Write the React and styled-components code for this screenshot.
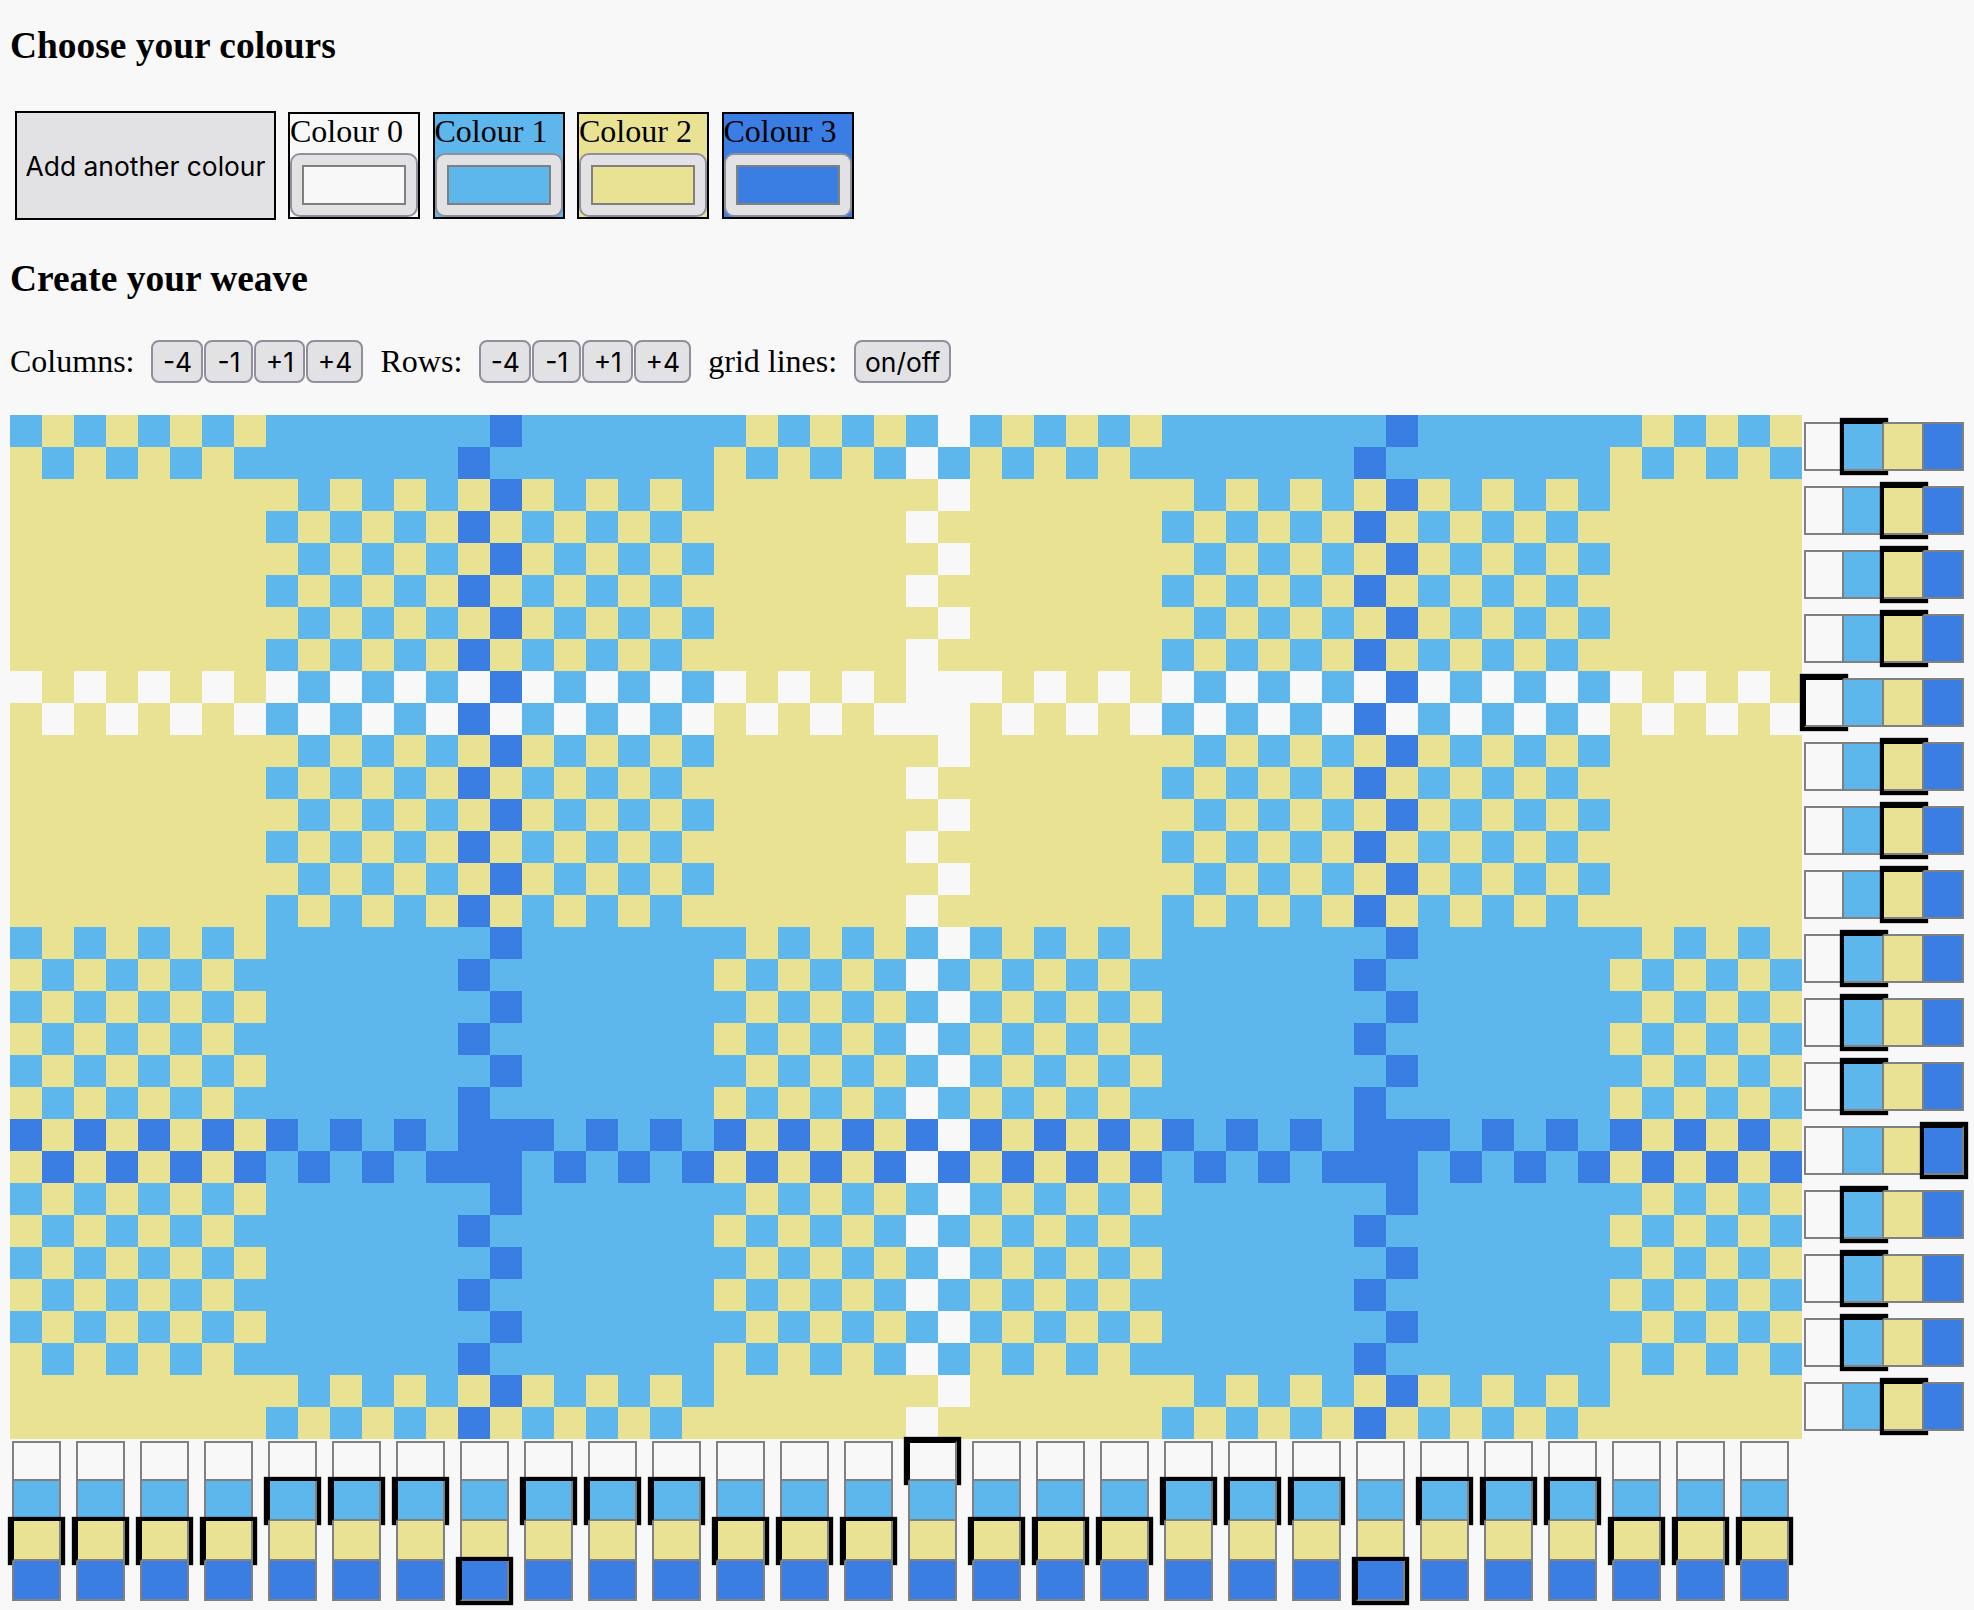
import React from "react";
import styled, { createGlobalStyle } from "styled-components";

const PALETTE = ["#f8f8f8", "#5db6ec", "#e9e293", "#3a7ee4"];
const COLUMN_COLOURS = [2,2,2,2,1,1,1,3,1,1,1,2,2,2,0,2,2,2,1,1,1,3,1,1,1,2,2,2];
const ROW_COLOURS = [1,2,2,2,0,2,2,2,1,1,1,3,1,1,1,2];

const GlobalStyle = createGlobalStyle`
  html, body { margin: 0; padding: 0; background: #f8f8f8; }
  body { font-family: "Liberation Serif", "Times New Roman", serif; font-size: 32px; color: #000; }
`;

const Page = styled.div`
  width: 1974px;
  height: 1610px;
  box-sizing: border-box;
  padding: 24px 0 0 10px;
  overflow: hidden;
`;

const Heading = styled.h3`
  margin: ${(p) => p.$top}px 0 0;
  font-size: 37.44px;
  line-height: 43px;
  font-weight: 700;
`;

const ColourBar = styled.div`
  display: flex;
  align-items: flex-start;
  margin: 44px 0 0 5px;
`;

const AddButton = styled.button`
  box-sizing: border-box;
  width: 261px;
  height: 109px;
  margin-right: 12px;
  padding: 0;
  background: #e2e2e5;
  border: 2.5px solid #000;
  border-radius: 0;
  font-family: Inter, "Liberation Sans", sans-serif;
  font-size: 26.4px;
  color: #000;
`;

const ColourItem = styled.div`
  box-sizing: border-box;
  width: 132px;
  height: 107px;
  margin: 1px 12.5px 0 0;
  display: flex;
  flex-direction: column;
  border: 2px solid #000;
  background: ${(p) => p.$colour};
`;

const ColourLabel = styled.span`
  font-size: 32px;
  line-height: 35px;
  height: 39px;
  white-space: nowrap;
`;

const SwatchButton = styled.div`
  box-sizing: border-box;
  width: 128px;
  height: 64px;
  display: flex;
  align-items: center;
  justify-content: center;
  background: #e2e2e5;
  border: 2px solid #8f8f9d;
  border-radius: 10px;
`;

const Swatch = styled.div`
  box-sizing: border-box;
  width: 104px;
  height: 40px;
  border: 2px solid #808080;
  background: ${(p) => p.$colour};
`;

const Toolbar = styled.div`
  display: flex;
  align-items: center;
  height: 43px;
  margin-top: 40px;
`;

const ToolLabel = styled.span`
  font-size: 32px;
  line-height: 43px;
  margin-right: 17px;
  white-space: nowrap;
`;

const ToolGroup = styled.div`
  display: flex;
  gap: 1px;
  margin-right: 17px;
`;

const ToolButton = styled.button`
  box-sizing: border-box;
  width: ${(p) => p.$w}px;
  height: 43px;
  padding: 0;
  background: #e2e2e5;
  border: 2px solid #8f8f9d;
  border-radius: 8px;
  font-family: Inter, "Liberation Sans", sans-serif;
  font-size: 26.4px;
  color: #000;
`;

const Workspace = styled.div`
  display: grid;
  grid-template-columns: 1792px 172px;
  margin-top: 32px;
`;

const Weave = styled.div`
  display: grid;
  grid-template-columns: repeat(56, 32px);
  grid-auto-rows: 32px;
`;

const Thread = styled.div`
  background: ${(p) => p.$colour};
`;

const RowSelectors = styled.div`
  display: flex;
  flex-direction: column;
  padding-left: 2px;
`;

const RowSlot = styled.div`
  display: flex;
  align-items: center;
  height: 64px;
  padding-bottom: 1px;
  box-sizing: border-box;
`;

const ColumnSelectors = styled.div`
  display: flex;
  padding: 2px 0 0 2px;
`;

const ColumnSlot = styled.div`
  display: flex;
  flex-direction: column;
  flex: 0 0 64px;
`;

const Choice = styled.div`
  box-sizing: border-box;
  background: ${(p) => p.$colour};
  border-style: solid;
  border-color: #808080;
  ${(p) => (p.$vertical
    ? `width: 49px; height: 40px; border-width: ${p.$first ? 2 : 0}px 2px 2px 2px;`
    : `width: 40px; height: 49px; border-width: 2px 2px 2px ${p.$first ? 2 : 0}px;`)}
  ${(p) => p.$selected && `
    box-shadow: 0 0 1px 4px #000;
    border-left-color: #000;
    border-top-color: #000;
  `}
`;

const Picker = ({ Slot, vertical, value }) => (
  <Slot>
    {PALETTE.map((c, i) => (
      <Choice key={i} $colour={c} $vertical={vertical} $first={i === 0} $selected={i === value} />
    ))}
  </Slot>
);

const threadColour = (r, c) => {
  const rowColour = ROW_COLOURS[Math.floor(r / 2)];
  const colColour = COLUMN_COLOURS[Math.floor(c / 2)];
  return PALETTE[(r + c) % 2 === 0 ? rowColour : colColour];
};

const STEP_BUTTONS = [["-4", 52], ["-1", 49], ["+1", 51], ["+4", 57]];

export default function App() {
  return (
    <Page>
      <GlobalStyle />
      <Heading $top={0}>Choose your colours</Heading>
      <ColourBar>
        <AddButton>Add another colour</AddButton>
        {PALETTE.map((c, i) => (
          <ColourItem key={i} $colour={c}>
            <ColourLabel>Colour {i}</ColourLabel>
            <SwatchButton><Swatch $colour={c} /></SwatchButton>
          </ColourItem>
        ))}
      </ColourBar>
      <Heading $top={37}>Create your weave</Heading>
      <Toolbar>
        <ToolLabel>Columns:</ToolLabel>
        <ToolGroup>
          {STEP_BUTTONS.map(([t, w]) => <ToolButton key={t} $w={w}>{t}</ToolButton>)}
        </ToolGroup>
        <ToolLabel>Rows:</ToolLabel>
        <ToolGroup>
          {STEP_BUTTONS.map(([t, w]) => <ToolButton key={t} $w={w}>{t}</ToolButton>)}
        </ToolGroup>
        <ToolLabel>grid lines:</ToolLabel>
        <ToolButton $w={97}>on/off</ToolButton>
      </Toolbar>
      <Workspace>
        <Weave>
          {Array.from({ length: 32 }, (_, r) =>
            Array.from({ length: 56 }, (_, c) => (
              <Thread key={`${r}-${c}`} $colour={threadColour(r, c)} />
            ))
          )}
        </Weave>
        <RowSelectors>
          {ROW_COLOURS.map((v, i) => <Picker key={i} Slot={RowSlot} value={v} />)}
        </RowSelectors>
        <ColumnSelectors>
          {COLUMN_COLOURS.map((v, i) => <Picker key={i} Slot={ColumnSlot} vertical value={v} />)}
        </ColumnSelectors>
      </Workspace>
    </Page>
  );
}
